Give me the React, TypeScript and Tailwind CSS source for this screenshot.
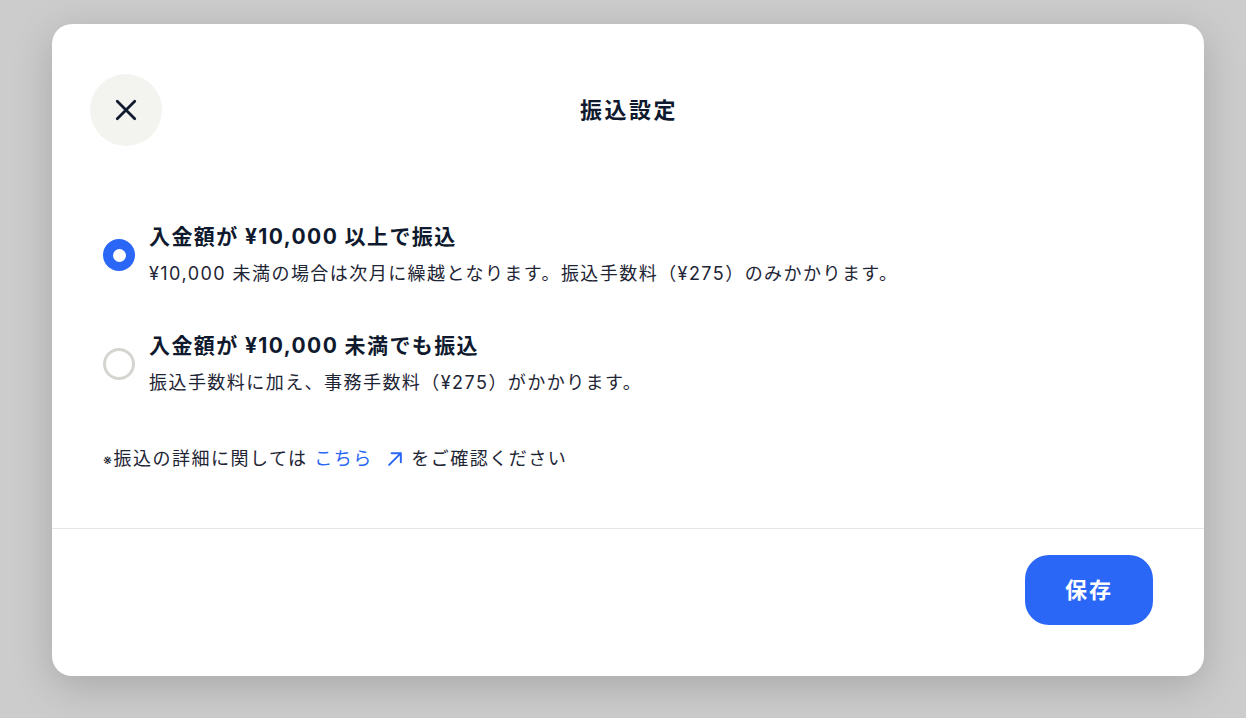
import { useState } from 'react'

const options = [
  {
    id: 'over',
    title: '入金額が ¥10,000 以上で振込',
    desc: '¥10,000 未満の場合は次月に繰越となります。振込手数料（¥275）のみかかります。',
  },
  {
    id: 'any',
    title: '入金額が ¥10,000 未満でも振込',
    desc: '振込手数料に加え、事務手数料（¥275）がかかります。',
  },
]

export default function App() {
  const [selected, setSelected] = useState('over')

  return (
    <div className="w-[1246px] h-[718px] bg-[#cccccc] pt-[24px] pl-[52px] font-['Inter','Noto_Sans_CJK_JP',sans-serif] text-[#0f1a2e]">
      <div className="w-[1152px] h-[652px] bg-white rounded-[20px] shadow-[0_10px_40px_rgba(0,0,0,0.18)] flex flex-col">
        {/* Header */}
        <div className="relative h-[172px] pt-[50px] px-[38px]">
          <button className="w-[72px] h-[72px] rounded-full bg-[#f3f3f0] flex items-center justify-center">
            <svg width="30" height="30" viewBox="0 0 24 24" fill="none" stroke="#0f1a2e" strokeWidth="2.2" strokeLinecap="round">
              <path d="M5 5l14 14M19 5L5 19" />
            </svg>
          </button>
          <h1 className="absolute left-0 right-0 top-[71px] pl-[2px] text-center text-[22px] leading-[30px] tracking-[2.5px] font-bold">振込設定</h1>
        </div>

        {/* Body */}
        <div className="flex-1 px-[51px] pt-[26px]">
          <div className="flex flex-col gap-[43px]">
            {options.map((o) => (
              <label key={o.id} className="flex items-center gap-[14px] cursor-pointer" onClick={() => setSelected(o.id)}>
                {selected === o.id ? (
                  <span className="w-[32px] h-[32px] rounded-full bg-[#2b67f6] flex items-center justify-center shrink-0">
                    <span className="w-[13px] h-[13px] rounded-full bg-white" />
                  </span>
                ) : (
                  <span className="w-[32px] h-[32px] rounded-full border-[3px] border-[#d4d4d0] shrink-0" />
                )}
                <span className="flex flex-col">
                  <span className="text-[21px] leading-[30px] tracking-[1.4px] font-bold">{o.title}</span>
                  <span className="text-[18px] leading-[28px] tracking-[1.45px] mt-[8px] text-[#1e2535]">{o.desc}</span>
                </span>
              </label>
            ))}
          </div>
          <p className="mt-[48px] text-[18px] leading-[28px] tracking-[1.5px] text-[#1e2535]">
            <span className="text-[14px]">※</span>振込の詳細に関しては{' '}
            <a className="text-[#2b67f6] inline-flex items-center gap-[12px]">
              こちら
              <svg width="20" height="20" viewBox="0 0 24 24" fill="none" stroke="#2b67f6" strokeWidth="2.4" strokeLinecap="round" strokeLinejoin="round">
                <path d="M5 19L19 5M8 5h11v11" />
              </svg>
            </a>{' '}
            をご確認ください
          </p>
        </div>

        {/* Footer */}
        <div className="border-t border-[#e5e5e5] h-[148px] px-[51px] flex justify-end pt-[26px]">
          <button className="w-[128px] h-[70px] rounded-[24px] bg-[#2b67f6] text-white text-[22px] tracking-[2px] font-bold">保存</button>
        </div>
      </div>
    </div>
  )
}
